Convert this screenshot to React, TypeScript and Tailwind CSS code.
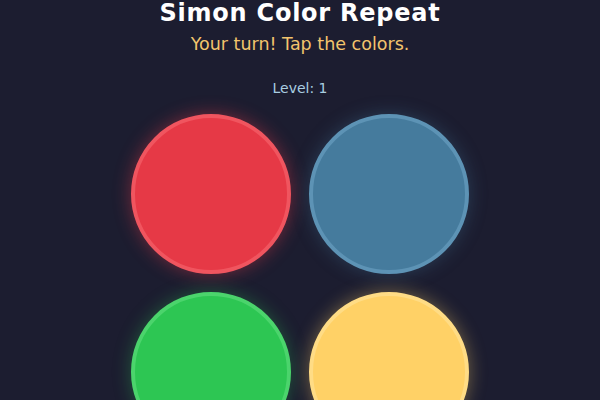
import React, { useState } from 'react';

type Pad = {
  id: string;
  fill: string;
};

// Four pads of the game board, in grid order
const PADS: Pad[] = [
  { id: 'red', fill: 'bg-[#e63946] border-[#f0555f] shadow-[0_0_18px_rgba(230,57,70,0.45)]' },
  { id: 'blue', fill: 'bg-[#457b9d] border-[#5d93b5] shadow-[0_0_18px_rgba(69,123,157,0.35)]' },
  { id: 'green', fill: 'bg-[#2dc653] border-[#4bd46c] shadow-[0_0_18px_rgba(45,198,83,0.35)]' },
  { id: 'yellow', fill: 'bg-[#ffd166] border-[#ffdc85] shadow-[0_0_18px_rgba(255,209,102,0.4)]' },
];

export default function App() {
  const [level] = useState(1);
  const [, setPressed] = useState<string[]>([]);

  return (
    <div className="min-h-screen w-full bg-[#1c1d30] font-['DejaVu_Sans',sans-serif] flex flex-col items-center overflow-hidden">
      <h1 className="text-[24px] leading-[26px] font-bold text-white tracking-[0.75px]">
        Simon Color Repeat
      </h1>
      <p className="mt-[9px] text-[17.5px] leading-[18px] text-[#f2c46d]">
        Your turn! Tap the colors.
      </p>
      <p className="mt-[28px] text-[14px] leading-[14px] text-[#a9cde0]">
        Level: {level}
      </p>

      <div className="mt-[19px] grid grid-cols-2 gap-[18px]">
        {PADS.map((pad) => (
          <button
            key={pad.id}
            type="button"
            onClick={() => setPressed((p) => [...p, pad.id])}
            className={`w-[160px] h-[160px] rounded-full border-4 ${pad.fill}`}
          />
        ))}
      </div>
    </div>
  );
}
